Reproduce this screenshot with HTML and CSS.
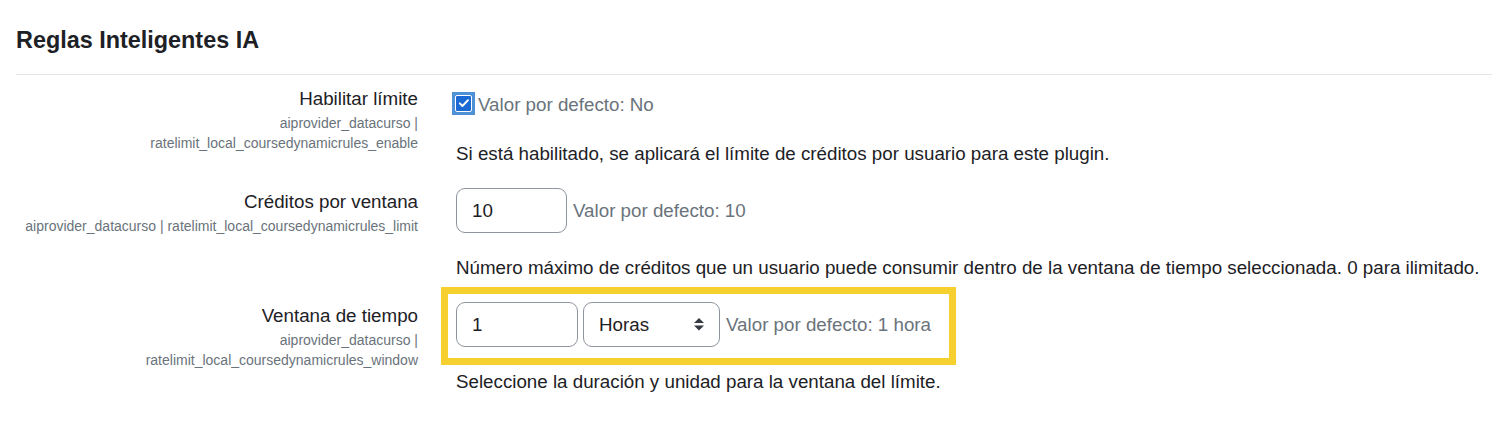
FILE: index.html
```html
<!DOCTYPE html>
<html lang="es">
<head>
<meta charset="utf-8">
<title>Reglas Inteligentes IA</title>
<link rel="stylesheet" href="styles.css">
</head>
<body>
<div class="page">
  <h3 class="section-title">Reglas Inteligentes IA</h3>
  <hr class="divider">

  <div class="fitem">
    <div class="flabel">
      <div class="label-main">Habilitar límite</div>
      <div class="label-key">aiprovider_datacurso |<br>ratelimit_local_coursedynamicrules_enable</div>
    </div>
    <div class="fcontent">
      <div class="check-line">
        <span class="check-focus">
          <span class="check-box">
            <svg viewBox="0 0 16 16" width="14" height="14"><path d="M3.2 8.4l3 3 6.4-6.6" fill="none" stroke="#fff" stroke-width="2.2" stroke-linecap="round" stroke-linejoin="round"/></svg>
          </span>
        </span>
        <span class="default-info">Valor por defecto: No</span>
      </div>
      <div class="fdesc desc-first">Si está habilitado, se aplicará el límite de créditos por usuario para este plugin.</div>
    </div>
  </div>

  <div class="fitem">
    <div class="flabel">
      <div class="label-main">Créditos por ventana</div>
      <div class="label-key">aiprovider_datacurso | ratelimit_local_coursedynamicrules_limit</div>
    </div>
    <div class="fcontent">
      <div class="control-line">
        <div class="text-input w-limit">10</div>
        <span class="default-info">Valor por defecto: 10</span>
      </div>
      <div class="fdesc desc-input">Número máximo de créditos que un usuario puede consumir dentro de la ventana de tiempo seleccionada. 0 para ilimitado.</div>
    </div>
  </div>

  <div class="fitem">
    <div class="flabel">
      <div class="label-main">Ventana de tiempo</div>
      <div class="label-key">aiprovider_datacurso |<br>ratelimit_local_coursedynamicrules_window</div>
    </div>
    <div class="fcontent">
      <div class="control-line highlighted">
        <div class="text-input w-window">1</div>
        <div class="select-input">
          <span>Horas</span>
          <svg class="select-arrows" viewBox="0 0 4 5" width="10" height="12.5"><path d="M2 0L0 2h4zm0 5L0 3h4z" fill="#343a40"/></svg>
        </div>
        <span class="default-info">Valor por defecto: 1 hora</span>
      </div>
      <div class="fdesc desc-high">Seleccione la duración y unidad para la ventana del límite.</div>
    </div>
  </div>
</div>
</body>
</html>
```
FILE: styles.css
```css
html, body {
  margin: 0;
  padding: 0;
  background: #ffffff;
}

body {
  font-family: "Liberation Sans", Arial, sans-serif;
  font-size: 18.75px;
  line-height: 28px;
  color: #1d2125;
}

.page {
  padding: 26px 0 0 16px;
}

.section-title {
  margin: 0;
  font-size: 23.4px;
  line-height: 28px;
  font-weight: 700;
  color: #1d2125;
}

.divider {
  margin: 20px 0 10px 0;
  border: 0;
  border-top: 1px solid #e3e5e8;
  height: 0;
}

.fitem {
  display: grid;
  grid-template-columns: 421px 1fr;
  margin-bottom: 20px;
}

.flabel {
  padding-right: 19px;
  text-align: right;
}

.label-main {
  line-height: 28px;
}

.label-key {
  font-size: 14px;
  line-height: 20px;
  color: #6a737b;
}

.fcontent {
  padding-left: 19px;
}

.check-line {
  display: flex;
  align-items: center;
  height: 40px;
}

.check-focus {
  width: 23px;
  height: 23px;
  margin-left: -4px;
  margin-right: 3px;
  margin-bottom: 4px;
  background: #4f91d6;
  display: flex;
  align-items: center;
  justify-content: center;
}

.check-box {
  width: 17px;
  height: 17px;
  box-sizing: border-box;
  border: 1.5px solid #ffffff;
  border-radius: 2px;
  background: #1b6ad3;
  display: flex;
  align-items: center;
  justify-content: center;
}

.default-info {
  color: #6a737b;
  white-space: nowrap;
}

.fdesc {
  line-height: 28px;
}

.desc-first {
  margin-top: 15px;
}

.desc-input {
  margin-top: 21px;
}

.desc-high {
  margin-top: 18px;
}

.control-line {
  display: flex;
  align-items: center;
  gap: 6px;
}

.highlighted {
  width: max-content;
  padding: 0 10px 3px 0;
  outline: 7px solid #f5d02f;
  outline-offset: 8px;
}

.text-input,
.select-input {
  box-sizing: border-box;
  height: 45px;
  border: 1px solid #8f959e;
  border-radius: 9px;
  padding: 0 15px;
  display: flex;
  align-items: center;
  color: #1d2125;
  background: #ffffff;
}

.w-limit {
  width: 111px;
}

.w-window {
  width: 122px;
  margin-right: -1px;
}

.select-input {
  width: 137px;
  justify-content: space-between;
}

.select-input span {
  color: #1d2125;
}

.select-arrows {
  display: block;
}
```
